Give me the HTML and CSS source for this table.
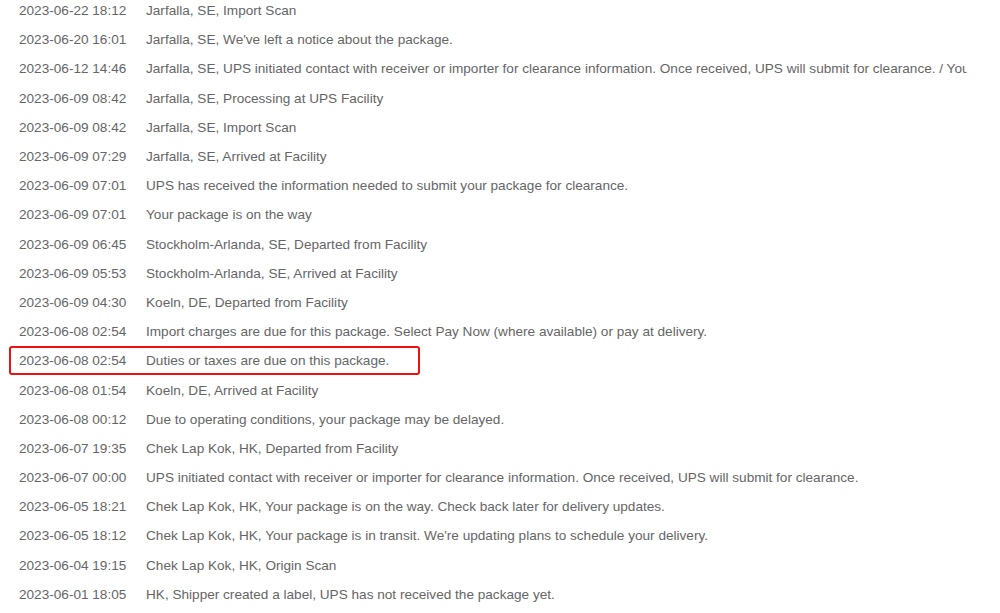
FILE: index.html
```html
<!DOCTYPE html>
<html>
<head>
<meta charset="utf-8">
<link rel="stylesheet" href="styles.css">
</head>
<body>
<div class="list">
  <div class="row"><span class="date">2023-06-22 18:12</span><span class="desc">Jarfalla, SE, Import Scan</span></div>
  <div class="row"><span class="date">2023-06-20 16:01</span><span class="desc">Jarfalla, SE, We've left a notice about the package.</span></div>
  <div class="row"><span class="date">2023-06-12 14:46</span><span class="desc">Jarfalla, SE, UPS initiated contact with receiver or importer for clearance information. Once received, UPS will submit for clearance. / Your package is on hold</span></div>
  <div class="row"><span class="date">2023-06-09 08:42</span><span class="desc">Jarfalla, SE, Processing at UPS Facility</span></div>
  <div class="row"><span class="date">2023-06-09 08:42</span><span class="desc">Jarfalla, SE, Import Scan</span></div>
  <div class="row"><span class="date">2023-06-09 07:29</span><span class="desc">Jarfalla, SE, Arrived at Facility</span></div>
  <div class="row"><span class="date">2023-06-09 07:01</span><span class="desc">UPS has received the information needed to submit your package for clearance.</span></div>
  <div class="row"><span class="date">2023-06-09 07:01</span><span class="desc">Your package is on the way</span></div>
  <div class="row"><span class="date">2023-06-09 06:45</span><span class="desc">Stockholm-Arlanda, SE, Departed from Facility</span></div>
  <div class="row"><span class="date">2023-06-09 05:53</span><span class="desc">Stockholm-Arlanda, SE, Arrived at Facility</span></div>
  <div class="row"><span class="date">2023-06-09 04:30</span><span class="desc">Koeln, DE, Departed from Facility</span></div>
  <div class="row"><span class="date">2023-06-08 02:54</span><span class="desc">Import charges are due for this package. Select Pay Now (where available) or pay at delivery.</span></div>
  <div class="row highlight"><span class="date">2023-06-08 02:54</span><span class="desc">Duties or taxes are due on this package.</span></div>
  <div class="row"><span class="date">2023-06-08 01:54</span><span class="desc">Koeln, DE, Arrived at Facility</span></div>
  <div class="row"><span class="date">2023-06-08 00:12</span><span class="desc">Due to operating conditions, your package may be delayed.</span></div>
  <div class="row"><span class="date">2023-06-07 19:35</span><span class="desc">Chek Lap Kok, HK, Departed from Facility</span></div>
  <div class="row"><span class="date">2023-06-07 00:00</span><span class="desc">UPS initiated contact with receiver or importer for clearance information. Once received, UPS will submit for clearance.</span></div>
  <div class="row"><span class="date">2023-06-05 18:21</span><span class="desc">Chek Lap Kok, HK, Your package is on the way. Check back later for delivery updates.</span></div>
  <div class="row"><span class="date">2023-06-05 18:12</span><span class="desc">Chek Lap Kok, HK, Your package is in transit. We're updating plans to schedule your delivery.</span></div>
  <div class="row"><span class="date">2023-06-04 19:15</span><span class="desc">Chek Lap Kok, HK, Origin Scan</span></div>
  <div class="row"><span class="date">2023-06-01 18:05</span><span class="desc">HK, Shipper created a label, UPS has not received the package yet.</span></div>
</div>
</body>
</html>
```
FILE: styles.css
```css
html, body {
  margin: 0;
  padding: 0;
  background: #ffffff;
}
body {
  font-family: "Liberation Sans", Arial, sans-serif;
  font-size: 13.6px;
  color: #666666;
  overflow: hidden;
  height: 613px;
}
.list {
  width: 967px;
  overflow: hidden;
  margin-top: -4px;
}
.row {
  position: relative;
  display: flex;
  height: 29.2px;
  align-items: center;
  white-space: nowrap;
}
.date {
  flex: 0 0 146px;
  box-sizing: border-box;
  padding-left: 19px;
}
.desc {
  flex: 0 0 auto;
}
.highlight::after {
  content: "";
  position: absolute;
  left: 9px;
  top: 0;
  width: 411px;
  height: 29px;
  box-sizing: border-box;
  border: 2px solid #ee1111;
  border-radius: 3px;
}
```
